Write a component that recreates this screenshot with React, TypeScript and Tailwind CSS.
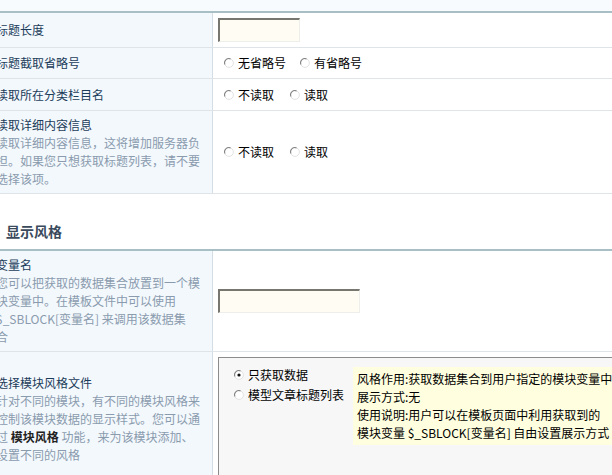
import React from "react";

const font = { fontFamily: '"Noto Sans CJK SC", "Liberation Sans", sans-serif' };

function Radio({ checked = false }: { checked?: boolean }) {
  return (
    <svg width="10" height="10" viewBox="0 0 10 10" className="shrink-0">
      <circle cx="5" cy="5" r="4.4" fill="#fff" stroke="#e2e2e2" strokeWidth="1" />
      <path d="M1 6.6 A4.2 4.2 0 0 1 6.6 1" fill="none" stroke="#858585" strokeWidth="1.1" />
      {checked && <circle cx="5" cy="5" r="1.6" fill="#111" />}
    </svg>
  );
}

function Option({ label, checked }: { label: string; checked?: boolean }) {
  return (
    <span className="inline-flex items-center gap-[4px] text-black">
      <Radio checked={checked} />
      <span>{label}</span>
    </span>
  );
}

function Input({ w }: { w: string }) {
  return (
    <div
      className={`${w} h-[24px] bg-[#fffdf3] border-t-[2px] border-l-[2px] border-b border-r border-t-[#77766f] border-l-[#77766f] border-b-[#eeeeea] border-r-[#eeeeea]`}
    />
  );
}

function Label({ title, lines }: { title: string; lines?: React.ReactNode[] }) {
  return (
    <div className="w-[221px] shrink-0 bg-[#f3f8fd] border-r border-[#d2dde6] pl-[4px] py-[5px] flex flex-col justify-center leading-[18px] whitespace-nowrap overflow-hidden">
      <div className="text-[#1b3c5a]">{title}</div>
      {lines?.map((l, i) => (
        <div key={i} className="text-[#8a9bad]">
          {l}
        </div>
      ))}
    </div>
  );
}

function Row({
  h,
  title,
  lines,
  children,
}: {
  h: string;
  title: string;
  lines?: React.ReactNode[];
  children: React.ReactNode;
}) {
  return (
    <div className={`flex ${h} border-b border-[#dfe4e8]`}>
      <Label title={title} lines={lines} />
      <div className="flex-1 pl-[5px] flex items-center">{children}</div>
    </div>
  );
}

export default function App() {
  return (
    <div className="w-[612px] h-[475px] overflow-hidden bg-white text-[12px]" style={font}>
      <div className="h-[11px] bg-[#f7fbfd]" />
      <div className="ml-[-8px] border-t-[2px] border-[#a8bfc5]">
        <Row h="h-[35px]" title="标题长度">
          <Input w="w-[82px]" />
        </Row>
        <Row h="h-[31px]" title="标题截取省略号">
          <div className="flex items-center gap-[14px] pl-[6px]">
            <Option label="无省略号" />
            <Option label="有省略号" />
          </div>
        </Row>
        <Row h="h-[32px]" title="读取所在分类栏目名">
          <div className="flex items-center gap-[16px] pl-[6px]">
            <Option label="不读取" />
            <Option label="读取" />
          </div>
        </Row>
        <Row
          h="h-[83px]"
          title="读取详细内容信息"
          lines={["读取详细内容信息，这将增加服务器负", "担。如果您只想获取标题列表，请不要", "选择该项。"]}
        >
          <div className="flex items-center gap-[16px] pl-[6px]">
            <Option label="不读取" />
            <Option label="读取" />
          </div>
        </Row>

        <div className="h-[55px] flex items-end pb-[9px] pl-[14px]">
          <span className="text-[14px] font-bold text-[#3a4a5c] leading-[18px]">显示风格</span>
        </div>

        <div className="border-t-[2px] border-[#a8bfc5]">
          <Row
            h="h-[101px]"
            title="变量名"
            lines={[
              "您可以把获取的数据集合放置到一个模",
              "块变量中。在模板文件中可以使用",
              "$_SBLOCK[变量名] 来调用该数据集",
              "合",
            ]}
          >
            <Input w="w-[142px]" />
          </Row>
          <div className="flex h-[134px]">
            <Label
              title="选择模块风格文件"
              lines={[
                "针对不同的模块，有不同的模块风格来",
                "控制该模块数据的显示样式。您可以通",
                <>
                  过 <span className="text-[#222] font-semibold">模块风格</span> 功能，来为该模块添加、
                </>,
                "设置不同的风格",
              ]}
            />
            <div className="flex-1 pl-[5px] pt-[5px]">
              <div className="h-[124px] bg-[#f7f7f7] border-t border-l border-[#8c8c8c] flex pl-[15px] pt-[7px]">
                <div className="flex flex-col leading-[20px] w-[119px] shrink-0">
                  <Option label="只获取数据" checked />
                  <Option label="模型文章标题列表" />
                </div>
                <div className="self-start mt-[2px] bg-[#ffffdf] pl-[4px] py-[3px] leading-[18px] text-black whitespace-nowrap flex-1 overflow-hidden">
                  <div>风格作用:获取数据集合到用户指定的模块变量中</div>
                  <div>展示方式:无</div>
                  <div>使用说明:用户可以在模板页面中利用获取到的</div>
                  <div>模块变量 $_SBLOCK[变量名] 自由设置展示方式</div>
                </div>
              </div>
            </div>
          </div>
        </div>
      </div>
    </div>
  );
}
